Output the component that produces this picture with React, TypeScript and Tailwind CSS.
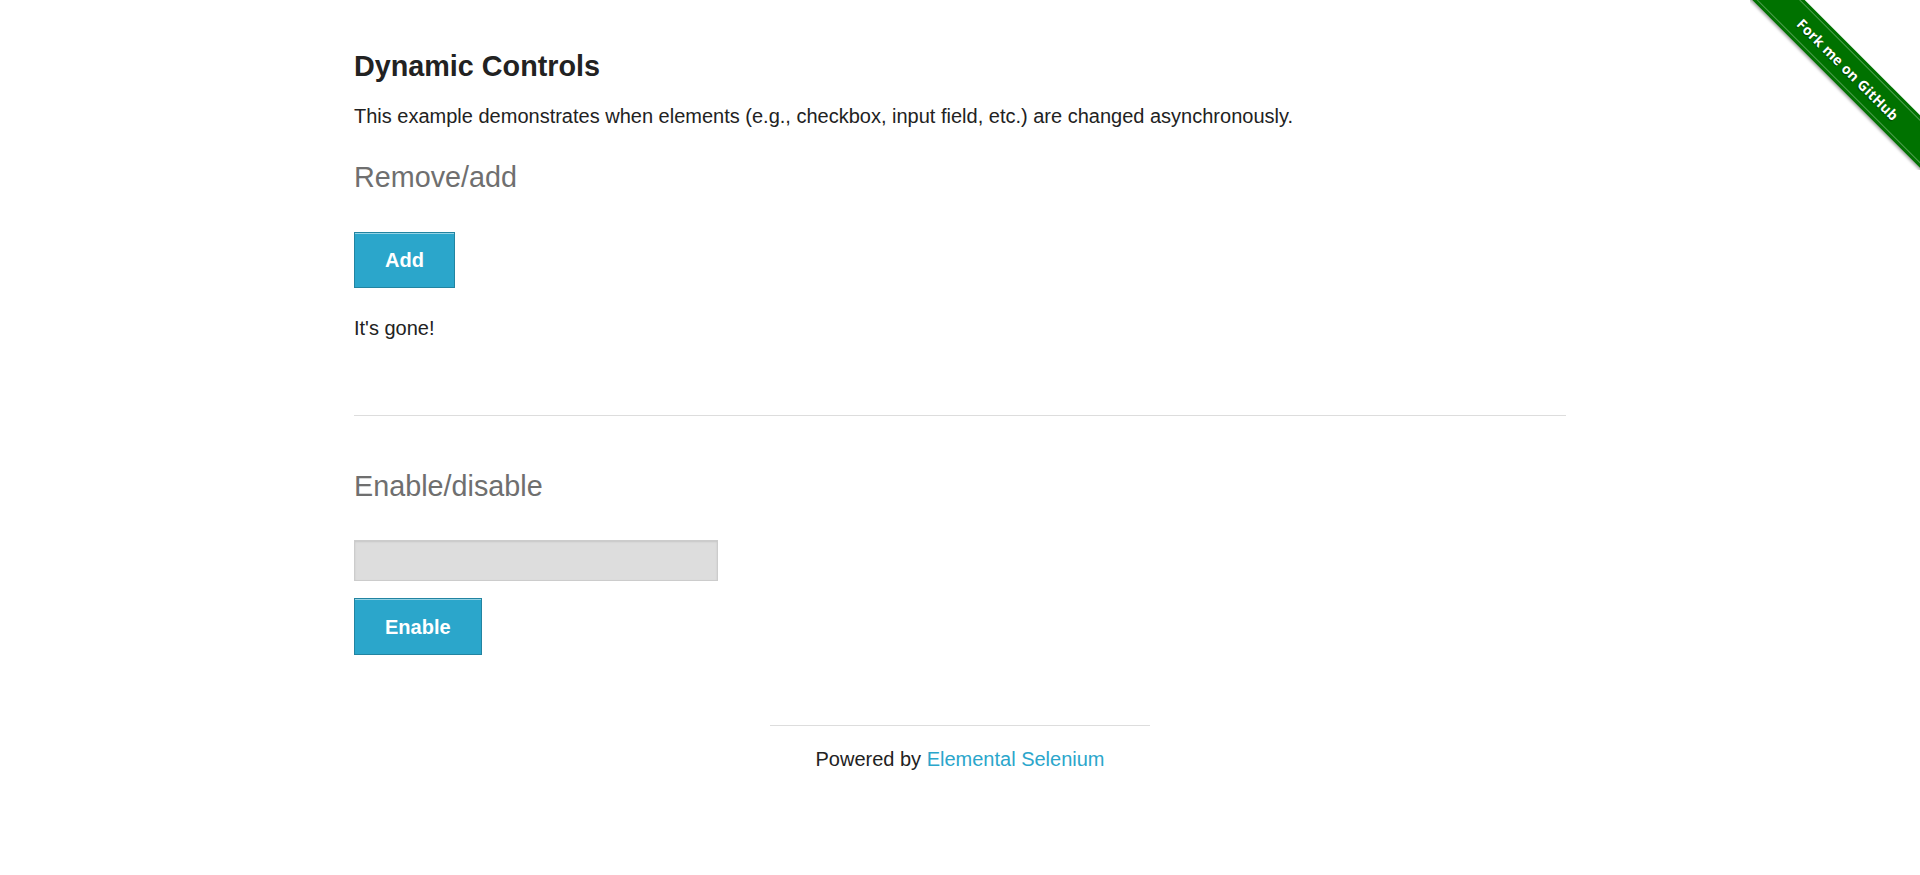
import { useState } from "react";

const ForkRibbon = () => {
  return (
    <div className="absolute top-0 right-0 w-[170px] h-[170px] overflow-hidden pointer-events-none">
      <div className="absolute left-[-42px] top-[51px] w-[280px] h-[37px] rotate-45 bg-[#007200] shadow-[0_2px_3px_rgba(0,0,0,0.35)] flex items-center justify-center">
        <div className="w-full h-[31px] border-y border-white/30 flex items-center justify-center">
          <span className="text-white text-[14px] font-bold tracking-[0.3px] font-['Open_Sans',sans-serif] [text-shadow:0_1px_1px_rgba(0,0,0,0.5)]">
            Fork me on GitHub
          </span>
        </div>
      </div>
    </div>
  );
};

const App = () => {
  const [checkboxGone, setCheckboxGone] = useState(true);
  const [checked, setChecked] = useState(false);
  const [inputEnabled, setInputEnabled] = useState(false);
  const [text, setText] = useState("");

  return (
    <div className="relative min-h-[875px] bg-white text-[#222222] font-['Liberation_Sans',Arial,sans-serif]">
      <ForkRibbon />

      <div className="w-[1212px] mx-auto pt-[49px]">
        <h4 className="text-[28.75px] leading-[34px] font-bold">Dynamic Controls</h4>
        <p className="mt-[17px] text-[20px] leading-[32px]">
          This example demonstrates when elements (e.g., checkbox, input field, etc.) are changed asynchronously.
        </p>

        <h4 className="mt-[28px] text-[28.75px] leading-[34px] text-[#6f6f6f]">Remove/add</h4>

        {!checkboxGone && (
          <label className="mt-[20px] flex items-center gap-2 text-[20px] leading-[32px]">
            <input type="checkbox" checked={checked} onChange={(e) => setChecked(e.target.checked)} />
            A checkbox
          </label>
        )}

        <button
          type="button"
          onClick={() => setCheckboxGone((g) => !g)}
          className="mt-[38px] h-[56px] px-[30px] flex items-center bg-[#2ba6cb] border border-[#2284a1] shadow-[inset_0_1px_0_rgba(255,255,255,0.5)] text-white text-[20px] font-bold cursor-pointer"
        >
          {checkboxGone ? "Add" : "Remove"}
        </button>

        <p className="mt-[24px] text-[20px] leading-[32px]">{checkboxGone ? "It's gone!" : "It's back!"}</p>

        <hr className="mt-[71px] border-0 border-t border-[#dddddd]" />

        <h4 className="mt-[53px] text-[28.75px] leading-[34px] text-[#6f6f6f]">Enable/disable</h4>

        <input
          type="text"
          value={text}
          disabled={!inputEnabled}
          onChange={(e) => setText(e.target.value)}
          className={`mt-[37px] block w-[364px] h-[41px] px-[8px] text-[17px] border border-[#cccccc] shadow-[inset_0_1px_2px_rgba(0,0,0,0.1)] outline-none ${
            inputEnabled ? "bg-white" : "bg-[#dddddd]"
          }`}
        />

        <button
          type="button"
          onClick={() => setInputEnabled((v) => !v)}
          className="mt-[17px] h-[57px] px-[30px] flex items-center bg-[#2ba6cb] border border-[#2284a1] shadow-[inset_0_1px_0_rgba(255,255,255,0.5)] text-white text-[20px] font-bold cursor-pointer"
        >
          {inputEnabled ? "Disable" : "Enable"}
        </button>
      </div>

      <div className="mt-[70px] flex flex-col items-center">
        <hr className="w-[380px] border-0 border-t border-[#dddddd]" />
        <div className="mt-[17px] text-[20px] leading-[32px]">
          Powered by{" "}
          <a href="#" className="text-[#2ba6cb]">
            Elemental Selenium
          </a>
        </div>
      </div>
    </div>
  );
};

export default App;
